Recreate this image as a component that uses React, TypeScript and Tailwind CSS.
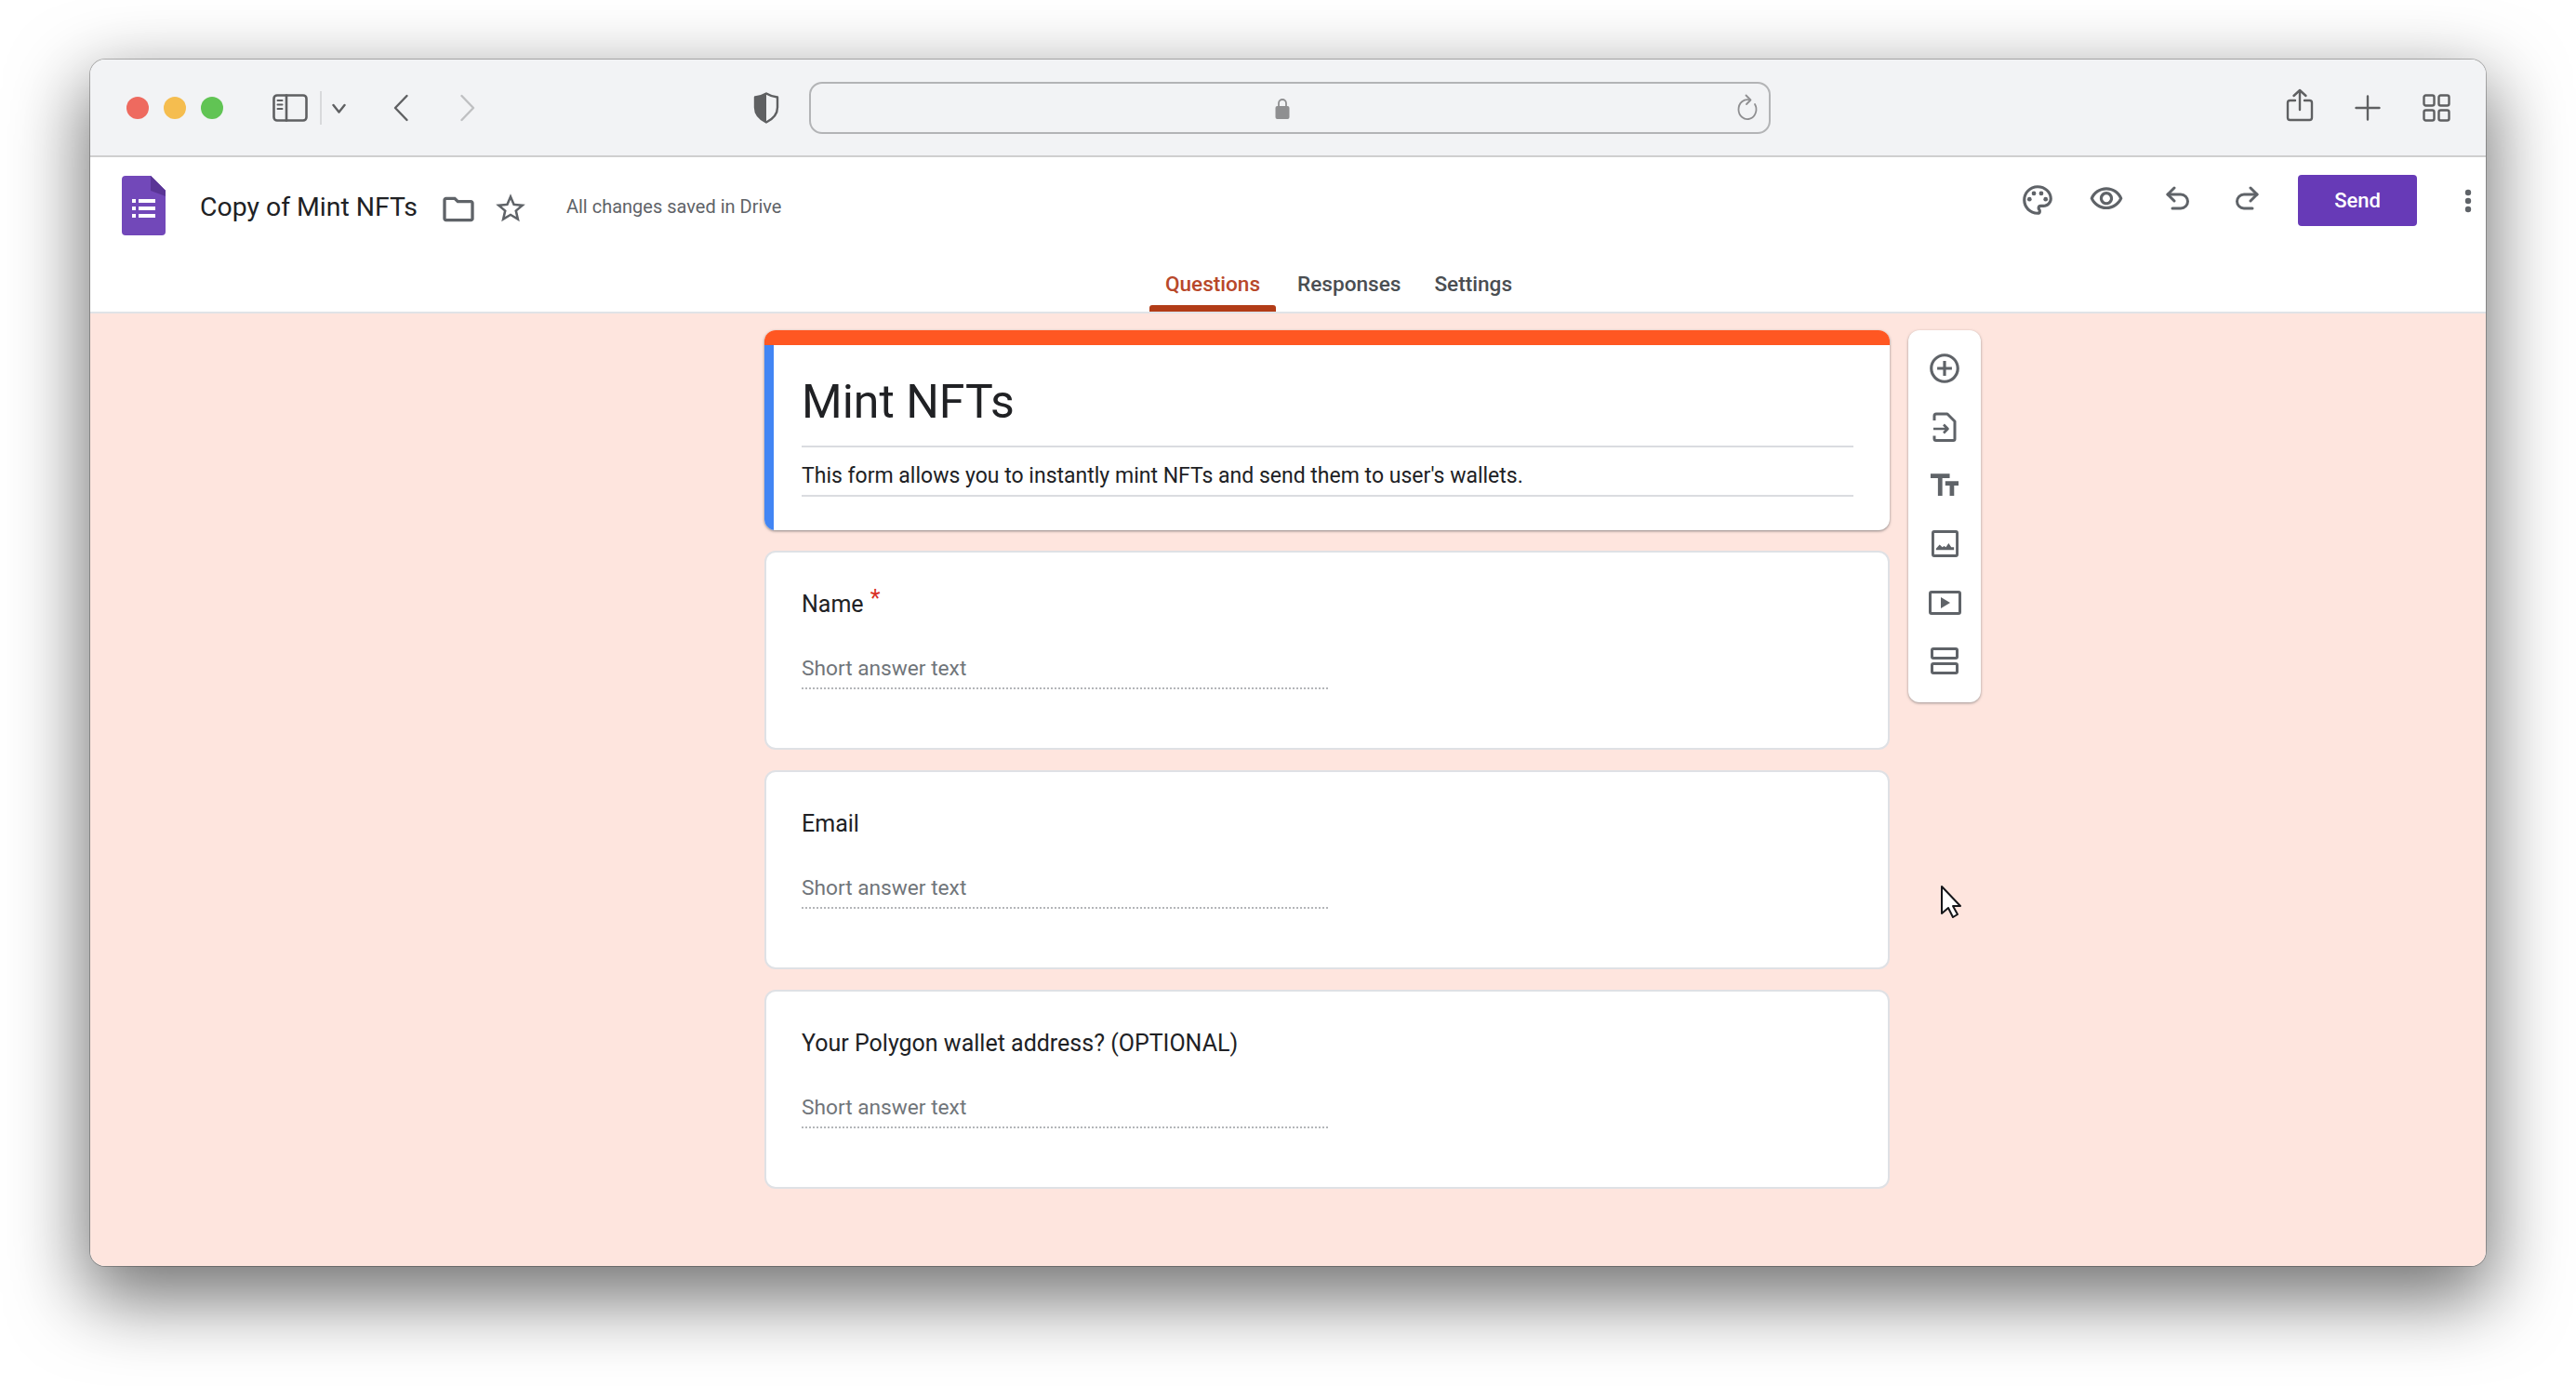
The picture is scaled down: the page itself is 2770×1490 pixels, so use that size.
import React from 'react';

const Icon = ({ className, d, children }: { className: string; d?: string; children?: React.ReactNode }) => (
  <svg viewBox="0 0 24 24" className={className} fill="#5f6368">
    {d && <path d={d} />}
    {children}
  </svg>
);

const ChromeLine = ({ className, children, stroke = '#5f6062', sw = 2.4, vb = '0 0 32 32' }: { className: string; children: React.ReactNode; stroke?: string; sw?: number; vb?: string }) => (
  <svg viewBox={vb} className={className} fill="none" stroke={stroke} strokeWidth={sw} strokeLinecap="round" strokeLinejoin="round">
    {children}
  </svg>
);

const BrowserBar = () => (
  <div className="flex h-[105px] shrink-0 items-center border-b-2 border-[#cfcfcf] bg-[#f2f3f5]">
    <div className="ml-[39px] flex gap-4">
      <div className="h-6 w-6 rounded-full bg-[#ee6a5f]" />
      <div className="h-6 w-6 rounded-full bg-[#f5bd4f]" />
      <div className="h-6 w-6 rounded-full bg-[#61c454]" />
    </div>
    {/* sidebar toggle */}
    <ChromeLine className="ml-[53px] h-[30px] w-[38px]" vb="0 0 38 30" sw={2.6}>
      <rect x="1.5" y="1.5" width="35" height="27" rx="3.5" />
      <path d="M15 1.5v27" />
      <path d="M5.5 7h5M5.5 11.5h5M5.5 16h5" strokeWidth="2" />
    </ChromeLine>
    <div className="ml-[13px] h-[36px] w-[2px] bg-[#d8d9db]" />
    <ChromeLine className="ml-[11px] mt-[3px] h-[12px] w-[15px]" vb="0 0 15 12">
      <path d="M1.5 2l6 7.5 6-7.5" />
    </ChromeLine>
    <ChromeLine className="ml-[50px] h-[30px] w-[18px]" vb="0 0 18 30">
      <path d="M15.5 2L3 15l12.5 13" />
    </ChromeLine>
    <ChromeLine className="ml-[54px] h-[30px] w-[18px]" vb="0 0 18 30" stroke="#bfc0c2">
      <path d="M2.5 2L15 15 2.5 28" />
    </ChromeLine>
    {/* privacy shield */}
    <svg viewBox="0 0 28 34" className="ml-[298px] h-[34px] w-[28px]">
      <path d="M14 1.5C10 4 6 5 2 5.5v11c0 7 5 12.5 12 16 7-3.5 12-9 12-16v-11C22 5 18 4 14 1.5z" fill="#f2f3f5" stroke="#5f6062" strokeWidth="2.4" strokeLinejoin="round" />
      <path d="M14 1.5C10 4 6 5 2 5.5v11c0 7 5 12.5 12 16z" fill="#5f6062" />
    </svg>
    {/* address bar */}
    <div className="relative ml-[32px] flex h-[56px] w-[1034px] items-center justify-center rounded-[14px] border-2 border-[#b3b4b6]">
      <svg viewBox="0 0 16 24" className="mr-[16px] h-[24px] w-[16px]">
        <path d="M4 11V7a4 4 0 0 1 8 0v4" fill="none" stroke="#8f8f91" strokeWidth="1.8" />
        <rect x="0.5" y="10" width="15" height="14" rx="2" fill="#8f8f91" />
      </svg>
      <ChromeLine className="absolute right-[11px] top-[11px] h-[30px] w-[24px]" vb="0 0 24 30" stroke="#8f8f91" sw={1.8}>
        <path d="M14.5 6.5A9.5 10.5 0 1 0 20 11" />
        <path d="M10.5 1.5l5 5-4.5 4.5" />
      </ChromeLine>
    </div>
    <div className="ml-auto mr-[38px] flex items-center">
      <ChromeLine className="mb-[5px] h-[36px] w-[30px]" vb="0 0 30 36">
        <path d="M10 13H4.5a2.5 2.5 0 0 0-2.5 2.5v16A2.5 2.5 0 0 0 4.5 34h21a2.5 2.5 0 0 0 2.5-2.5v-16a2.5 2.5 0 0 0-2.5-2.5H20" />
        <path d="M15 23V2M8.5 8L15 2l6.5 6" />
      </ChromeLine>
      <ChromeLine className="ml-[44px] h-[28px] w-[28px]" vb="0 0 28 28">
        <path d="M14 1.5v25M1.5 14h25" />
      </ChromeLine>
      <ChromeLine className="ml-[45px] h-[30px] w-[30px]" vb="0 0 30 30">
        <rect x="1.5" y="1.5" width="11" height="11" rx="2" />
        <rect x="17.5" y="1.5" width="11" height="11" rx="2" />
        <rect x="1.5" y="17.5" width="11" height="11" rx="2" />
        <rect x="17.5" y="17.5" width="11" height="11" rx="2" />
      </ChromeLine>
    </div>
  </div>
);

const FormHeader = () => (
  <div className="flex h-[168px] shrink-0 flex-col border-b-2 border-[#e0e3e7] bg-white">
    <div className="flex h-[92px] items-start">
      <svg viewBox="0 0 47 64" className="ml-[34px] mt-[20px] h-[64px] w-[47px] shrink-0">
        <path d="M4 0h27l16 16v44a4 4 0 0 1-4 4H4a4 4 0 0 1-4-4V4a4 4 0 0 1 4-4z" fill="#7248b9" />
        <path d="M31 0l16 16v6L31 16z" fill="#5a3596" />
        <path d="M31 0v12a4 4 0 0 0 4 4h12z" fill="#5a3596" />
        <path d="M11 25h4v4h-4zM11 33h4v4h-4zM11 41h4v4h-4zM18 25h18v4H18zM18 33h18v4H18zM18 41h18v4H18z" fill="#fff" />
      </svg>
      <div className="ml-[37px] mt-[34px] text-[28.4px] leading-[40px] text-[#202124]">Copy of Mint NFTs</div>
      <Icon className="ml-[24px] mt-[36px] h-[40px] w-[40px] shrink-0" d="M9.17 6l2 2H20v10H4V6h5.17M10 4H4c-1.1 0-1.99.9-1.99 2L2 18c0 1.1.9 2 2 2h16c1.1 0 2-.9 2-2V8c0-1.1-.9-2-2-2h-8l-2-2z" />
      <Icon className="ml-[17px] mt-[36px] h-[38px] w-[38px] shrink-0" d="M22 9.24l-7.19-.62L12 2 9.19 8.63 2 9.24l5.46 4.73L5.82 21 12 17.27 18.18 21l-1.63-7.03L22 9.24zM12 15.4l-3.76 2.27 1-4.28-3.32-2.88 4.38-.38L12 6.1l1.71 4.04 4.38.38-3.32 2.88 1 4.28L12 15.4z" />
      <div className="ml-[41px] mt-[40px] text-[20px] leading-[26px] text-[#5f6368]">All changes saved in Drive</div>
      <div className="ml-auto flex items-start">
        <Icon className="mt-[27px] h-[38px] w-[38px]" d="M12 22C6.49 22 2 17.51 2 12S6.49 2 12 2s10 4.04 10 9c0 3.31-2.69 6-6 6h-1.77c-.28 0-.5.22-.5.5 0 .12.05.23.13.33.41.47.64 1.06.64 1.67A2.5 2.5 0 0 1 12 22zm0-18c-4.41 0-8 3.59-8 8s3.59 8 8 8c.28 0 .5-.22.5-.5a.54.54 0 0 0-.14-.35c-.41-.46-.63-1.05-.63-1.65a2.5 2.5 0 0 1 2.5-2.5H16c2.21 0 4-1.79 4-4 0-3.86-3.59-7-8-7z">
          <circle cx="6.5" cy="11.5" r="1.5" />
          <circle cx="9.5" cy="7.5" r="1.5" />
          <circle cx="14.5" cy="7.5" r="1.5" />
          <circle cx="17.5" cy="11.5" r="1.5" />
        </Icon>
        <Icon className="ml-[36px] mt-[26px] h-[38px] w-[38px]" d="M12 6c3.79 0 7.17 2.13 8.82 5.5C19.17 14.87 15.79 17 12 17s-7.17-2.13-8.82-5.5C4.83 8.13 8.21 6 12 6m0-2C7 4 2.73 7.11 1 11.5 2.73 15.89 7 19 12 19s9.27-3.11 11-7.5C21.27 7.11 17 4 12 4zm0 5c1.38 0 2.5 1.12 2.5 2.5S13.38 14 12 14s-2.5-1.12-2.5-2.5S10.62 9 12 9m0-2c-2.48 0-4.5 2.02-4.5 4.5S9.52 16 12 16s4.5-2.02 4.5-4.5S14.48 7 12 7z" />
        <ChromeLine className="ml-[44px] mt-[31px] h-[30px] w-[28px]" vb="0 0 28 30" stroke="#5f6368" sw={3}>
          <path d="M10 2L3 9l7 7" />
          <path d="M3 9h14a7.5 7.5 0 0 1 0 15H8" />
        </ChromeLine>
        <ChromeLine className="ml-[46px] mt-[31px] h-[30px] w-[28px]" vb="0 0 28 30" stroke="#5f6368" sw={3}>
          <path d="M18 2l7 7-7 7" />
          <path d="M25 9H11a7.5 7.5 0 0 0 0 15h9" />
        </ChromeLine>
        <button className="ml-[41px] mt-[19px] flex h-[55px] w-[128px] items-center justify-center rounded-[4px] bg-[#673ab7] text-[22px] font-medium text-white">
          Send
        </button>
        <svg viewBox="0 0 8 26" className="ml-[51px] mr-[15px] mt-[34px] h-[26px] w-[8px]" fill="#5f6368">
          <circle cx="4" cy="4" r="3.2" />
          <circle cx="4" cy="13" r="3.2" />
          <circle cx="4" cy="22" r="3.2" />
        </svg>
      </div>
    </div>
    <div className="ml-[1139px] flex h-[74px] items-start">
      <div className="flex h-[74px] w-[136px] flex-col items-center justify-between">
        <span className="mt-[30px] text-[22.6px] font-medium leading-[30px] text-[#b8482a]">Questions</span>
        <div className="h-[7px] w-full rounded-t-[3px] bg-[#b23c17]" />
      </div>
      <span className="ml-[23px] mt-[30px] text-[22.6px] font-medium leading-[30px] text-[#4a4e52]">Responses</span>
      <span className="ml-[36px] mt-[30px] text-[22.6px] font-medium leading-[30px] text-[#4a4e52]">Settings</span>
    </div>
  </div>
);

const QuestionCard = ({ title, required }: { title: string; required?: boolean }) => (
  <div className="flex h-[214px] flex-col rounded-[12px] border-2 border-[#dfe1e5] bg-white pl-[38px]">
    <div className="mt-[39px] text-[25px] leading-[34px] text-[#202124]">
      {title}
      {required && <span className="relative top-[-6px] ml-[7px] text-[#d93025]">*</span>}
    </div>
    <div className="mt-[37px] w-[566px] border-b-2 border-dotted border-[#b4b6b9] pb-[5px] text-[22.7px] leading-[30px] text-[#70757a]">
      Short answer text
    </div>
  </div>
);

const SideTool = ({ children }: { children: React.ReactNode }) => (
  <div className="flex h-[63px] w-full items-center justify-center">{children}</div>
);

const SideToolbar = () => (
  <div className="ml-[20px] flex h-[400px] w-[78px] flex-col self-start rounded-[12px] bg-white pt-[9px] shadow-[0_1px_3px_rgba(60,64,67,0.5)]">
    <SideTool>
      <Icon className="h-[38px] w-[38px]" d="M13 7h-2v4H7v2h4v4h2v-4h4v-2h-4V7zm-1-5C6.48 2 2 6.48 2 12s4.48 10 10 10 10-4.48 10-10S17.52 2 12 2zm0 18c-4.41 0-8-3.59-8-8s3.59-8 8-8 8 3.59 8 8-3.59 8-8 8z" />
    </SideTool>
    <SideTool>
      <ChromeLine className="h-[32px] w-[26px]" vb="0 0 26 32" stroke="#5f6368" sw={3}>
        <path d="M2 9V4a2 2 0 0 1 2-2h12l8 8v19a1.5 1.5 0 0 1-1.5 1.5H4a2 2 0 0 1-2-2v-3" strokeLinecap="butt" />
        <path d="M1 18h15M12 13.5l4.5 4.5-4.5 4.5" strokeWidth="2.6" strokeLinecap="butt" />
      </ChromeLine>
    </SideTool>
    <SideTool>
      <Icon className="h-[38px] w-[38px]" d="M2.5 4v3h5v12h3V7h5V4h-13zm19 5h-9v3h3v7h3v-7h3V9z" />
    </SideTool>
    <SideTool>
      <svg viewBox="0 0 30 30" className="h-[29px] w-[29px]" fill="none" stroke="#5f6368" strokeWidth="3">
        <rect x="1.5" y="1.5" width="27" height="27" rx="1.5" />
        <path d="M5 22v-1.5l4-4.5 3 3 2-1.5 2 1.5 3-4.5 3 4.5H25V22z" fill="#5f6368" stroke="none" />
      </svg>
    </SideTool>
    <SideTool>
      <svg viewBox="0 0 35 26" className="h-[26px] w-[35px]" fill="none" stroke="#5f6368" strokeWidth="3">
        <rect x="1.5" y="1.5" width="32" height="23" rx="1.5" />
        <path d="M13 7l10 6-10 6z" fill="#5f6368" stroke="none" />
      </svg>
    </SideTool>
    <SideTool>
      <svg viewBox="0 0 30 29" className="h-[29px] w-[30px]" fill="none" stroke="#5f6368" strokeWidth="3">
        <rect x="1.5" y="1.5" width="27" height="10" rx="1.5" />
        <rect x="1.5" y="17.5" width="27" height="10" rx="1.5" />
      </svg>
    </SideTool>
  </div>
);

const FormBody = () => (
  <div className="relative flex flex-1 items-start bg-[#fee5de] pl-[725px] pt-[18px]">
    <div className="flex w-[1210px] flex-col gap-[22px]">
      {/* title card */}
      <div className="h-[215px] overflow-hidden rounded-[12px] bg-white shadow-[0_1px_3px_rgba(60,64,67,0.6)]">
        <div className="h-[16px] bg-[#ff5722]" />
        <div className="h-full border-l-[10px] border-[#4285f4] pl-[30px] pr-[39px]">
          <div className="flex h-[110px] items-end border-b-2 border-[#dadce0] pb-[17px] text-[50px] leading-[60px] text-[#202124]">Mint NFTs</div>
          <div className="flex h-[53px] items-end border-b-2 border-[#dadce0] pb-[4px] text-[23px] leading-[32px] text-[#202124]">
            This form allows you to instantly mint NFTs and send them to user's wallets.
          </div>
        </div>
      </div>
      <QuestionCard title="Name" required />
      <QuestionCard title="Email" />
      <QuestionCard title="Your Polygon wallet address? (OPTIONAL)" />
    </div>
    <SideToolbar />
    {/* mouse cursor */}
    <svg viewBox="0 0 24 37" className="absolute left-[1989px] top-[614px] h-[37px] w-[24px]">
      <path d="M2 2v29l7-6 5 10 5-3-5-9h8z" fill="#fff" stroke="#15161a" strokeWidth="2" strokeLinejoin="round" />
    </svg>
  </div>
);

export default function App() {
  return (
    <div className="h-[1490px] w-[2770px] overflow-hidden bg-white pl-[97px] pt-[64px] font-['Roboto',sans-serif]">
      <div className="flex h-[1297px] w-[2576px] flex-col overflow-hidden rounded-[16px] shadow-[0_0_0_1px_rgba(0,0,0,0.25),0_30px_80px_6px_rgba(0,0,0,0.55)]">
        <BrowserBar />
        <FormHeader />
        <FormBody />
      </div>
    </div>
  );
}
